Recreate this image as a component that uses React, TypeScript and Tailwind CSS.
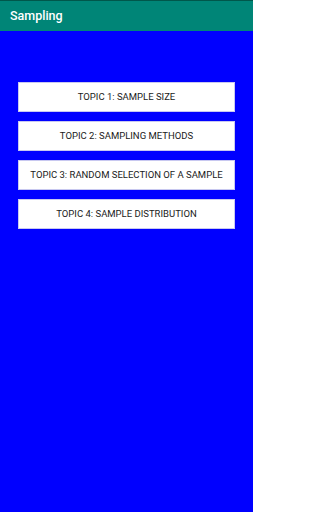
import React from 'react';

const topics = [
  'TOPIC 1: SAMPLE SIZE',
  'TOPIC 2: SAMPLING METHODS',
  'TOPIC 3: RANDOM SELECTION OF A SAMPLE',
  'TOPIC 4: SAMPLE DISTRIBUTION',
];

const App: React.FC = () => {
  return (
    <div className="w-[253px] h-[512px] bg-[#0000ff] flex flex-col font-['Roboto',sans-serif]">
      <div className="h-[31px] bg-[#008577] border-t border-[#00574b] flex items-center pl-[10px] shrink-0">
        <h1 className="text-white text-[12.5px] font-medium leading-none">Sampling</h1>
      </div>
      <div className="flex flex-col gap-[9px] px-[18px] pt-[51px]">
        {topics.map(topic => (
          <button
            key={topic}
            className="h-[30px] w-full bg-white border border-[#c8c8f0] text-[#1a1a1a] text-[9.5px] flex items-center justify-center"
          >
            {topic}
          </button>
        ))}
      </div>
    </div>
  );
};

export default App;
